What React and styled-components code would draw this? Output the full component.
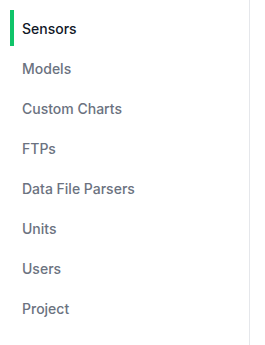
import styled, { createGlobalStyle } from 'styled-components'

const GlobalStyle = createGlobalStyle`
  html, body {
    margin: 0;
    background: #ffffff;
    font-family: Inter, "Noto Sans", sans-serif;
  }
`

const Sidebar = styled.nav`
  box-sizing: border-box;
  width: 250px;
  height: 345px;
  border-right: 1px solid #e5e7eb;
  padding: 10px 0 0 10px;
  display: flex;
  flex-direction: column;
  gap: 4px;
`

const NavItem = styled.a`
  display: flex;
  align-items: center;
  height: 36px;
  padding-left: 8px;
  border-left: 4px solid ${({ active }) => (active ? '#10c469' : 'transparent')};
  color: ${({ active }) => (active ? '#111827' : '#6b7280')};
  font-size: 14px;
  font-weight: 500;
  text-decoration: none;
  cursor: pointer;
`

const items = [
  'Sensors',
  'Models',
  'Custom Charts',
  'FTPs',
  'Data File Parsers',
  'Units',
  'Users',
  'Project',
]

const App = () => (
  <>
    <GlobalStyle />
    <Sidebar>
      {items.map((item, i) => (
        <NavItem key={item} active={i === 0}>
          {item}
        </NavItem>
      ))}
    </Sidebar>
  </>
)

export default App
